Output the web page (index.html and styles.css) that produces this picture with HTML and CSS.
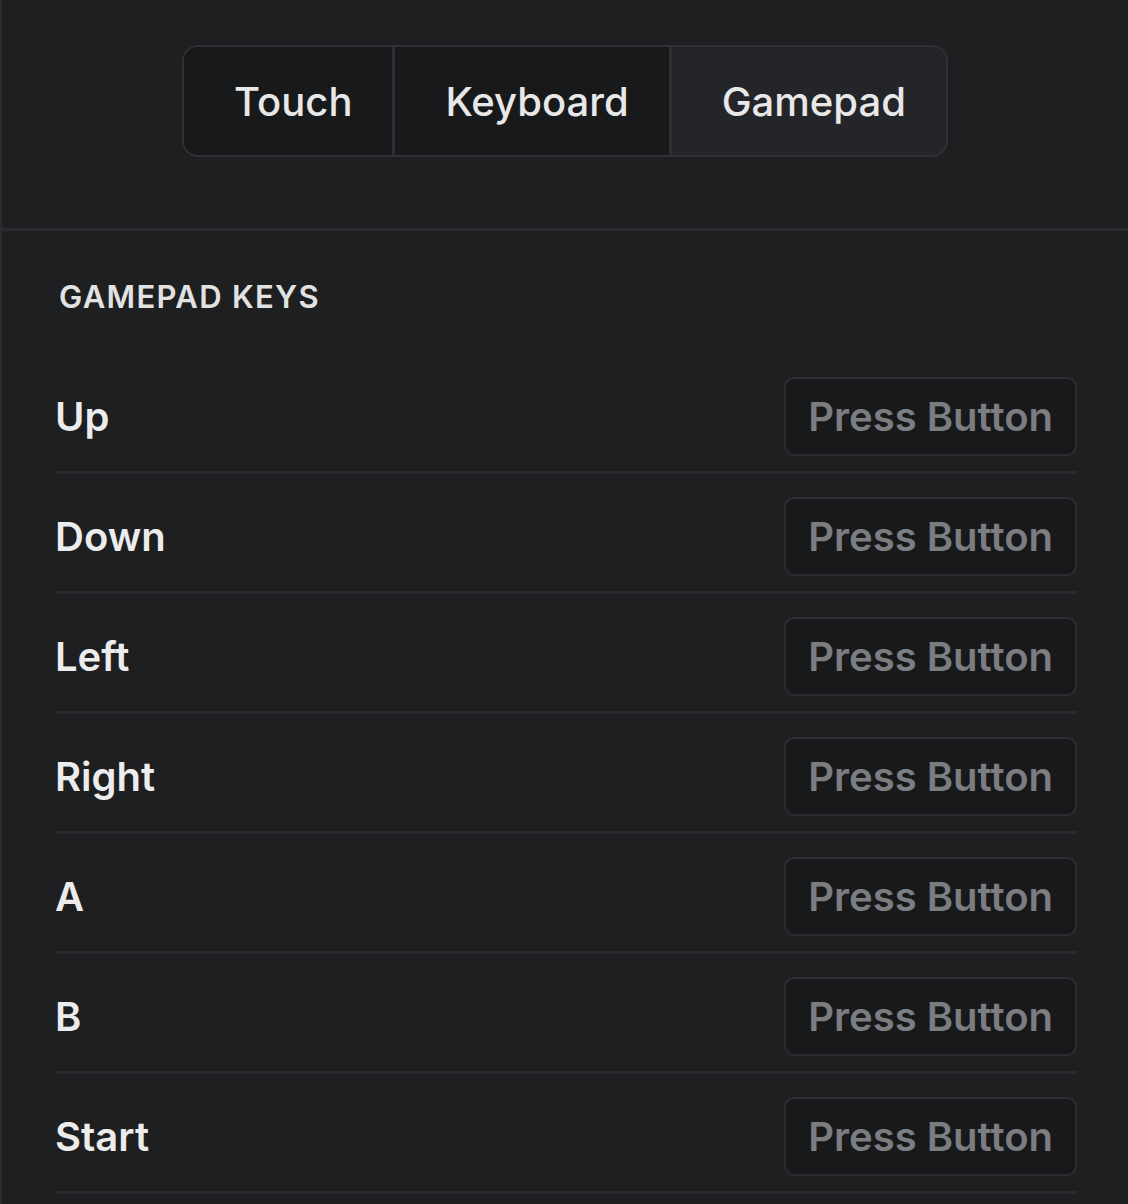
FILE: index.html
```html
<!DOCTYPE html>
<html>
<head>
<meta charset="utf-8">
<link rel="stylesheet" href="styles.css">
</head>
<body>
<div class="panel">
  <header class="header">
    <div class="tabs">
      <div class="tab">Touch</div>
      <div class="tab">Keyboard</div>
      <div class="tab active">Gamepad</div>
    </div>
  </header>
  <section class="section">
    <h2 class="title">GAMEPAD KEYS</h2>
    <div class="row"><span class="label">Up</span><span class="bind">Press Button</span></div>
    <div class="row"><span class="label">Down</span><span class="bind">Press Button</span></div>
    <div class="row"><span class="label">Left</span><span class="bind">Press Button</span></div>
    <div class="row"><span class="label">Right</span><span class="bind">Press Button</span></div>
    <div class="row"><span class="label">A</span><span class="bind">Press Button</span></div>
    <div class="row"><span class="label">B</span><span class="bind">Press Button</span></div>
    <div class="row"><span class="label">Start</span><span class="bind">Press Button</span></div>
  </section>
</div>
</body>
</html>
```

FILE: styles.css
```css
html, body {
  margin: 0;
  padding: 0;
  background: #1e1f21;
  height: 100%;
}
body {
  font-family: Inter, "Noto Sans", sans-serif;
  color: #e6e6e7;
  overflow: hidden;
}
.panel {
  border-left: 2px solid #2a2b2e;
  min-height: 100%;
  box-sizing: border-box;
}
.header {
  padding: 45px 0 71px;
  display: flex;
  justify-content: center;
  border-bottom: 3px solid #2a2b2e;
}
.tabs {
  display: flex;
  border: 2px solid #303134;
  border-radius: 16px;
  overflow: hidden;
  height: 112px;
  box-sizing: border-box;
}
.tab {
  display: flex;
  align-items: center;
  padding: 0 40px 0 50px;
  background: #18191b;
  font-size: 40px;
  font-weight: 500;
  color: #e8e8e9;
  border-left: 3px solid #2e2f32;
}
.tab:first-child {
  border-left: none;
}
.tab.active {
  background: #242528;
}
.section {
  padding: 0 51px 0 53px;
}
.title {
  margin: 0;
  padding: 47px 0 38px 4px;
  font-size: 31px;
  font-weight: 600;
  letter-spacing: 1.3px;
  line-height: 38px;
  color: #e2e2e3;
}
.row {
  display: flex;
  align-items: center;
  justify-content: space-between;
  padding: 23px 0 15px;
  border-bottom: 3px solid #2a2b2e;
}
.label {
  font-size: 40px;
  font-weight: 600;
  color: #ececed;
  line-height: 48px;
}
.bind {
  display: flex;
  align-items: center;
  height: 79px;
  box-sizing: border-box;
  padding: 0 22px;
  background: #18191b;
  border: 2px solid #2c2d30;
  border-radius: 10px;
  font-size: 40px;
  font-weight: 600;
  color: #7c7d81;
}
```
